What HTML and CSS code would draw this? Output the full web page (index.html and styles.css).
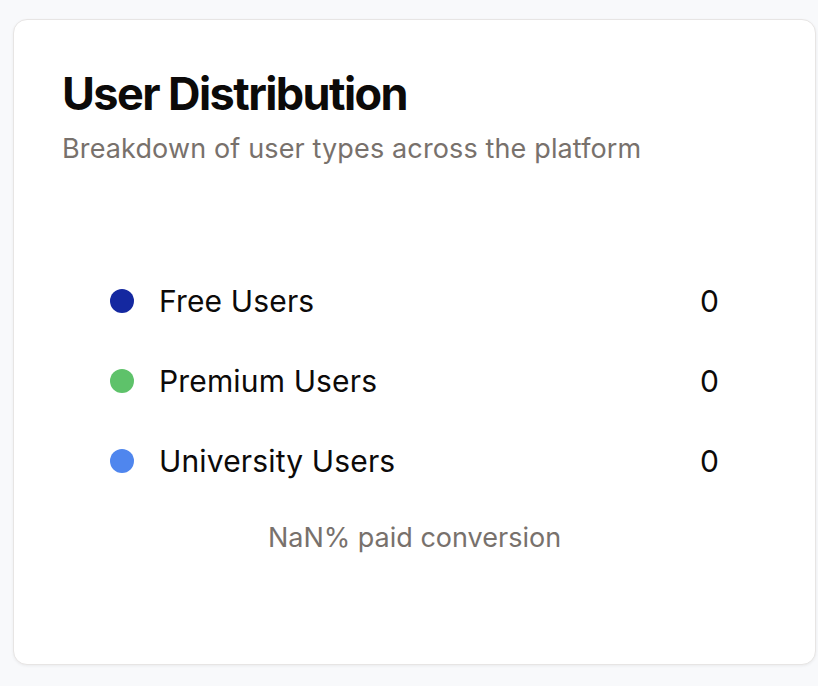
FILE: index.html
```html
<!DOCTYPE html>
<html>
<head>
<meta charset="utf-8">
<link rel="stylesheet" href="styles.css">
</head>
<body>
<div class="card">
  <h1 class="title">User Distribution</h1>
  <p class="subtitle">Breakdown of user types across the platform</p>
  <div class="legend">
    <div class="row"><span class="dot dot-free"></span><span class="label">Free Users</span><span class="value">0</span></div>
    <div class="row"><span class="dot dot-premium"></span><span class="label">Premium Users</span><span class="value">0</span></div>
    <div class="row"><span class="dot dot-uni"></span><span class="label">University Users</span><span class="value">0</span></div>
  </div>
  <p class="conversion">NaN% paid conversion</p>
</div>
</body>
</html>
```
FILE: styles.css
```css
html, body {
  margin: 0;
  padding: 0;
  background: #f8f9fb;
  font-family: Inter, "Noto Sans", sans-serif;
}
body {
  padding: 19px 2px 22px 13px;
}
.card {
  box-sizing: border-box;
  height: 646px;
  background: #ffffff;
  border: 1px solid #e7e5e4;
  border-radius: 14px;
  box-shadow: 0 1px 3px rgba(0,0,0,0.06);
  padding: 48px;
}
.title {
  margin: 0;
  font-size: 45px;
  line-height: 52px;
  font-weight: 700;
  letter-spacing: -0.035em;
  color: #0c0a09;
}
.subtitle {
  margin: 11px 0 0;
  font-size: 27px;
  line-height: 36px;
  letter-spacing: 0.005em;
  color: #78716c;
}
.legend {
  margin-top: 114px;
  padding: 0 48px;
  display: flex;
  flex-direction: column;
  gap: 40px;
}
.row {
  display: flex;
  align-items: center;
  height: 40px;
}
.dot {
  width: 24px;
  height: 24px;
  border-radius: 50%;
  margin-right: 25px;
}
.dot-free { background: #1428a0; }
.dot-premium { background: #5ec26a; }
.dot-uni { background: #4f86ee; }
.label {
  flex: 1;
  font-size: 30px;
  line-height: 40px;
  letter-spacing: 0.005em;
  color: #0c0a09;
}
.value {
  font-size: 30px;
  line-height: 40px;
  color: #0c0a09;
}
.conversion {
  margin: 39px 0 0;
  text-align: center;
  font-size: 27px;
  line-height: 36px;
  color: #78716c;
}
```
